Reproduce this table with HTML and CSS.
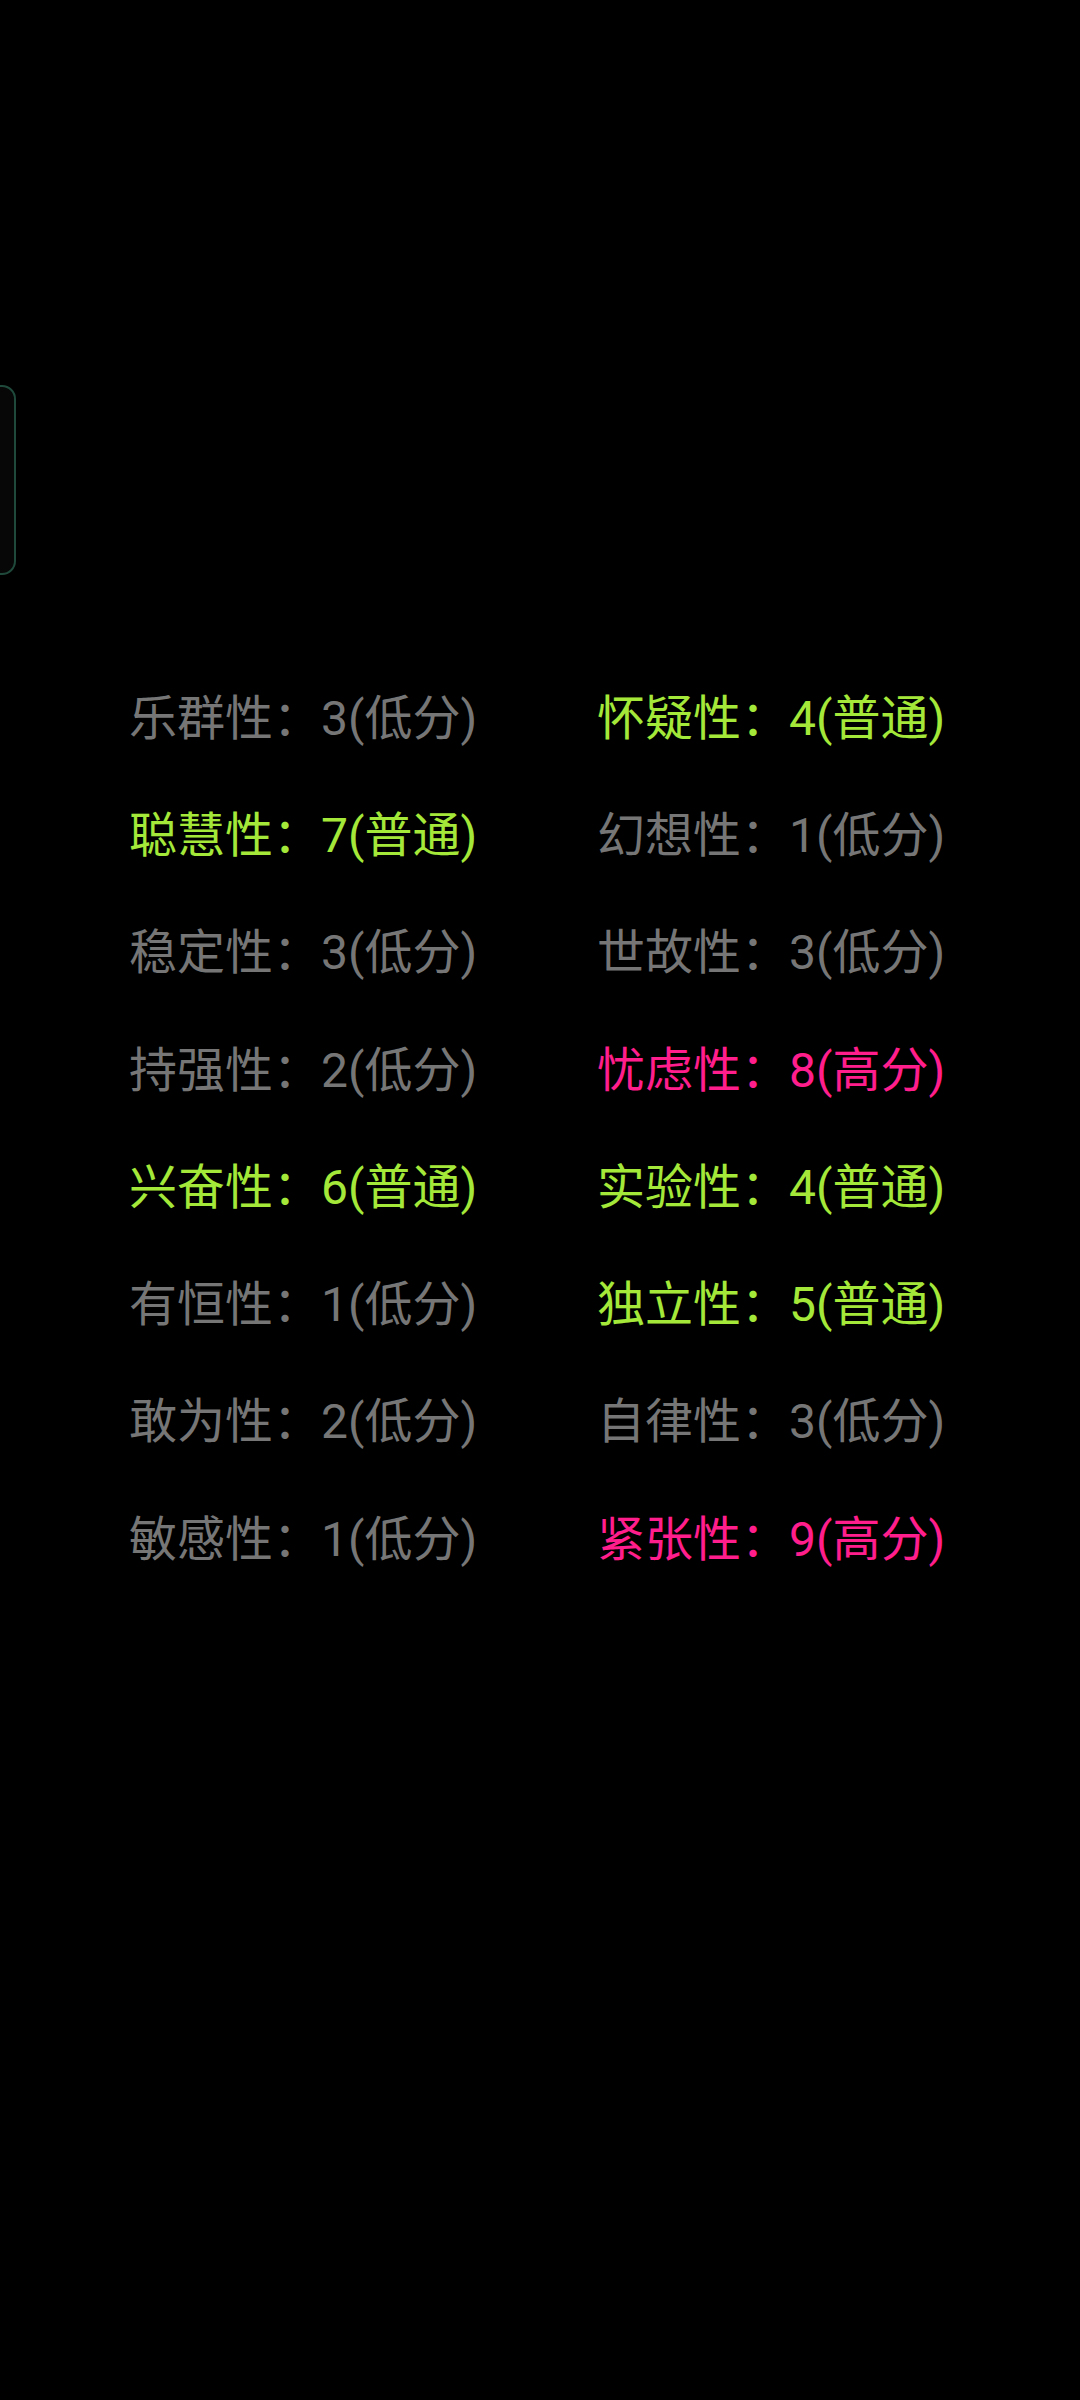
FILE: index.html
```html
<!DOCTYPE html>
<html lang="zh-CN">
<head>
<meta charset="utf-8">
<link rel="stylesheet" href="styles.css">
</head>
<body>
<div class="float-tab"></div>
<main class="traits">
  <div class="trait low">乐群性：3(低分)</div>
  <div class="trait mid">怀疑性：4(普通)</div>
  <div class="trait mid">聪慧性：7(普通)</div>
  <div class="trait low">幻想性：1(低分)</div>
  <div class="trait low">稳定性：3(低分)</div>
  <div class="trait low">世故性：3(低分)</div>
  <div class="trait low">持强性：2(低分)</div>
  <div class="trait high">忧虑性：8(高分)</div>
  <div class="trait mid">兴奋性：6(普通)</div>
  <div class="trait mid">实验性：4(普通)</div>
  <div class="trait low">有恒性：1(低分)</div>
  <div class="trait mid">独立性：5(普通)</div>
  <div class="trait low">敢为性：2(低分)</div>
  <div class="trait low">自律性：3(低分)</div>
  <div class="trait low">敏感性：1(低分)</div>
  <div class="trait high">紧张性：9(高分)</div>
</main>
</body>
</html>
```
FILE: styles.css
```css
html, body {
  margin: 0;
  padding: 0;
  background: #000;
  width: 1080px;
  height: 2400px;
  overflow: hidden;
}
body {
  position: relative;
  font-family: Roboto, "Noto Sans CJK SC", sans-serif;
}
.float-tab {
  position: absolute;
  left: -40px;
  top: 385px;
  width: 52px;
  height: 186px;
  border: 2px solid #1f4a3b;
  border-radius: 14px;
  background: #070707;
}
.traits {
  display: grid;
  grid-template-columns: 468px auto;
  grid-auto-rows: 117.3px;
  align-items: center;
  padding: 660px 0 0 129px;
}
.trait {
  font-size: 48px;
  line-height: 1;
  white-space: nowrap;
}
.low { color: #767676; }
.mid { color: #a4e83a; }
.high { color: #ff1e8c; }
```
